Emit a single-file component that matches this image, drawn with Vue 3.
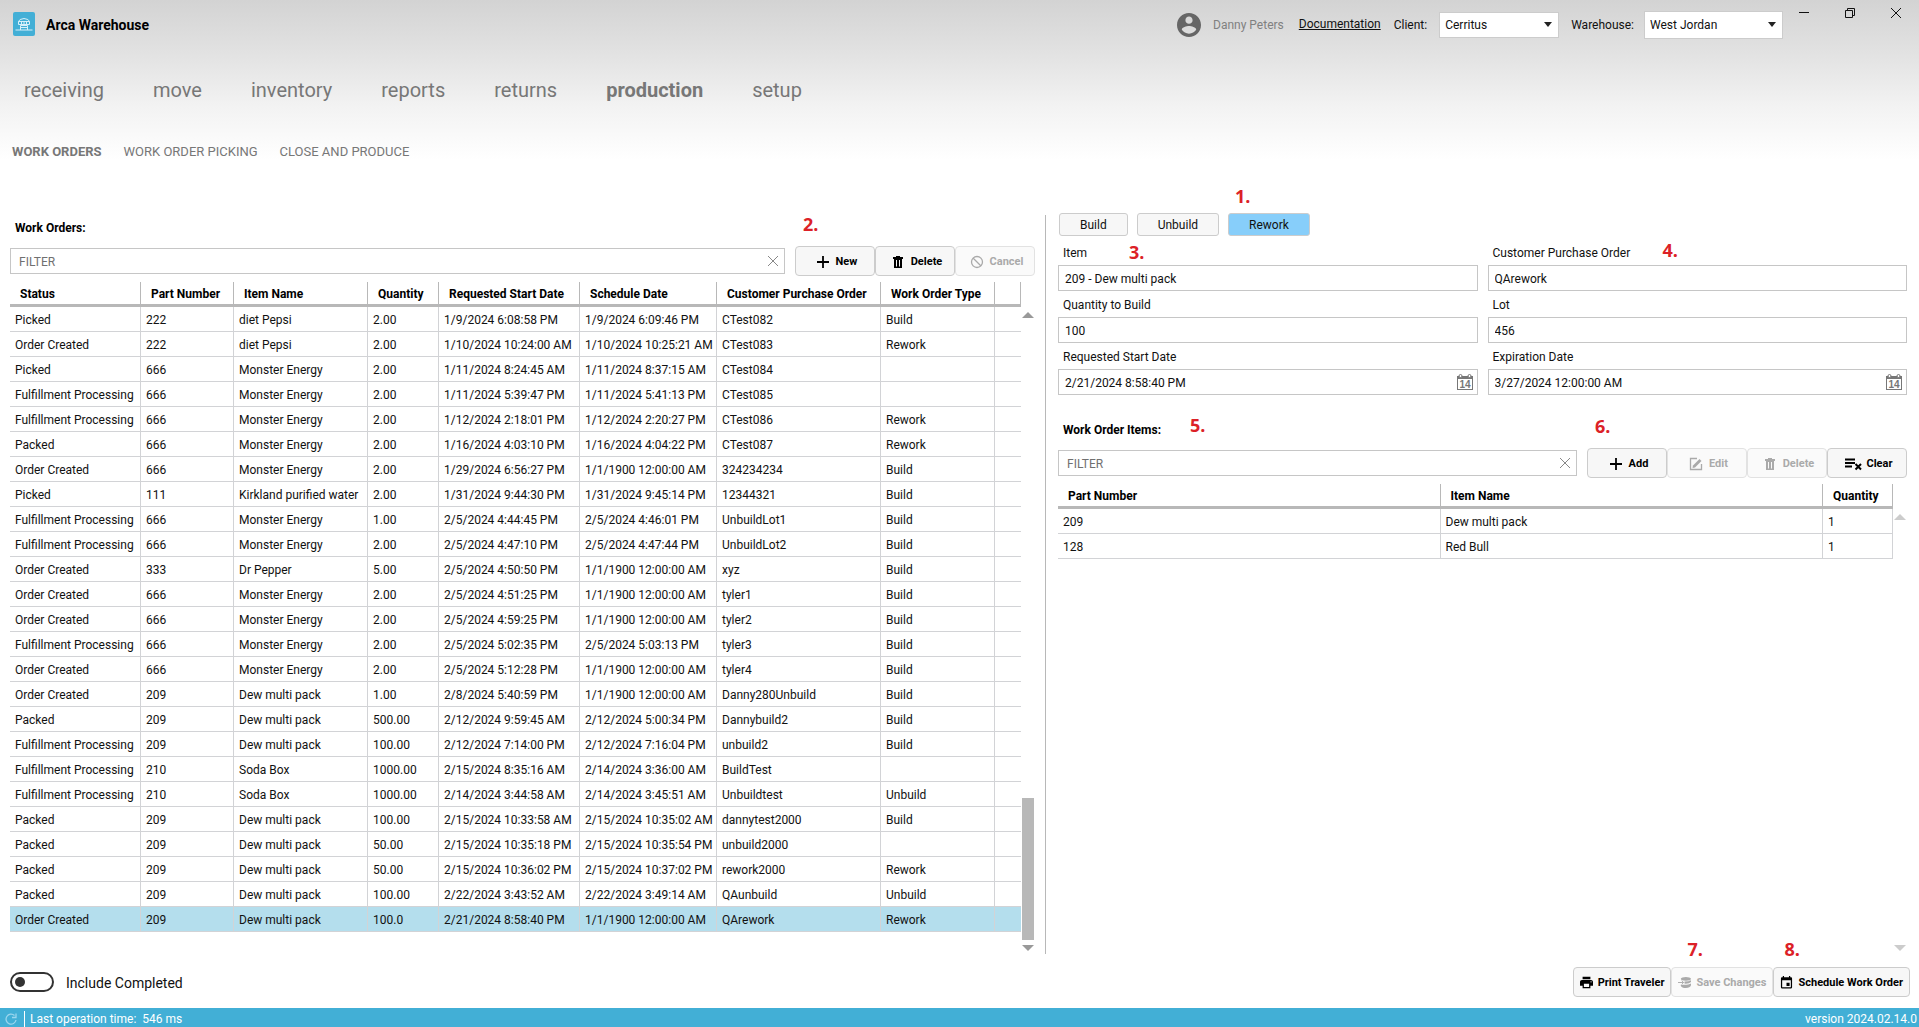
<script setup>
import { ref } from 'vue'

const navItems = ['receiving', 'move', 'inventory', 'reports', 'returns', 'production', 'setup']
const activeNav = ref('production')
const subItems = ['WORK ORDERS', 'WORK ORDER PICKING', 'CLOSE AND PRODUCE']
const activeSub = ref('WORK ORDERS')

const client = ref('Cerritus')
const warehouse = ref('West Jordan')
const orderFilter = ref('')
const itemFilter = ref('')
const includeCompleted = ref(false)

const modes = ['Build', 'Unbuild', 'Rework']
const mode = ref('Rework')

const form = ref({
  item: '209 - Dew multi pack',
  po: 'QArework',
  quantity: '100',
  lot: '456',
  start: '2/21/2024 8:58:40 PM',
  expires: '3/27/2024 12:00:00 AM'
})
const fields = [
  { key: 'item', label: 'Item', mark: '3.' },
  { key: 'po', label: 'Customer Purchase Order', mark: '4.' },
  { key: 'quantity', label: 'Quantity to Build' },
  { key: 'lot', label: 'Lot' },
  { key: 'start', label: 'Requested Start Date', date: true },
  { key: 'expires', label: 'Expiration Date', date: true }
]

const orderColumns = [
  'Status', 'Part Number', 'Item Name', 'Quantity', 'Requested Start Date',
  'Schedule Date', 'Customer Purchase Order', 'Work Order Type', ''
]
const F = 'Fulfillment Processing'
const O = 'Order Created'
const orders = [
  ['Picked', '222', 'diet Pepsi', '2.00', '1/9/2024 6:08:58 PM', '1/9/2024 6:09:46 PM', 'CTest082', 'Build'],
  [O, '222', 'diet Pepsi', '2.00', '1/10/2024 10:24:00 AM', '1/10/2024 10:25:21 AM', 'CTest083', 'Rework'],
  ['Picked', '666', 'Monster Energy', '2.00', '1/11/2024 8:24:45 AM', '1/11/2024 8:37:15 AM', 'CTest084', ''],
  [F, '666', 'Monster Energy', '2.00', '1/11/2024 5:39:47 PM', '1/11/2024 5:41:13 PM', 'CTest085', ''],
  [F, '666', 'Monster Energy', '2.00', '1/12/2024 2:18:01 PM', '1/12/2024 2:20:27 PM', 'CTest086', 'Rework'],
  ['Packed', '666', 'Monster Energy', '2.00', '1/16/2024 4:03:10 PM', '1/16/2024 4:04:22 PM', 'CTest087', 'Rework'],
  [O, '666', 'Monster Energy', '2.00', '1/29/2024 6:56:27 PM', '1/1/1900 12:00:00 AM', '324234234', 'Build'],
  ['Picked', '111', 'Kirkland purified water', '2.00', '1/31/2024 9:44:30 PM', '1/31/2024 9:45:14 PM', '12344321', 'Build'],
  [F, '666', 'Monster Energy', '1.00', '2/5/2024 4:44:45 PM', '2/5/2024 4:46:01 PM', 'UnbuildLot1', 'Build'],
  [F, '666', 'Monster Energy', '2.00', '2/5/2024 4:47:10 PM', '2/5/2024 4:47:44 PM', 'UnbuildLot2', 'Build'],
  [O, '333', 'Dr Pepper', '5.00', '2/5/2024 4:50:50 PM', '1/1/1900 12:00:00 AM', 'xyz', 'Build'],
  [O, '666', 'Monster Energy', '2.00', '2/5/2024 4:51:25 PM', '1/1/1900 12:00:00 AM', 'tyler1', 'Build'],
  [O, '666', 'Monster Energy', '2.00', '2/5/2024 4:59:25 PM', '1/1/1900 12:00:00 AM', 'tyler2', 'Build'],
  [F, '666', 'Monster Energy', '2.00', '2/5/2024 5:02:35 PM', '2/5/2024 5:03:13 PM', 'tyler3', 'Build'],
  [O, '666', 'Monster Energy', '2.00', '2/5/2024 5:12:28 PM', '1/1/1900 12:00:00 AM', 'tyler4', 'Build'],
  [O, '209', 'Dew multi pack', '1.00', '2/8/2024 5:40:59 PM', '1/1/1900 12:00:00 AM', 'Danny280Unbuild', 'Build'],
  ['Packed', '209', 'Dew multi pack', '500.00', '2/12/2024 9:59:45 AM', '2/12/2024 5:00:34 PM', 'Dannybuild2', 'Build'],
  [F, '209', 'Dew multi pack', '100.00', '2/12/2024 7:14:00 PM', '2/12/2024 7:16:04 PM', 'unbuild2', 'Build'],
  [F, '210', 'Soda Box', '1000.00', '2/15/2024 8:35:16 AM', '2/14/2024 3:36:00 AM', 'BuildTest', ''],
  [F, '210', 'Soda Box', '1000.00', '2/14/2024 3:44:58 AM', '2/14/2024 3:45:51 AM', 'Unbuildtest', 'Unbuild'],
  ['Packed', '209', 'Dew multi pack', '100.00', '2/15/2024 10:33:58 AM', '2/15/2024 10:35:02 AM', 'dannytest2000', 'Build'],
  ['Packed', '209', 'Dew multi pack', '50.00', '2/15/2024 10:35:18 PM', '2/15/2024 10:35:54 PM', 'unbuild2000', ''],
  ['Packed', '209', 'Dew multi pack', '50.00', '2/15/2024 10:36:02 PM', '2/15/2024 10:37:02 PM', 'rework2000', 'Rework'],
  ['Packed', '209', 'Dew multi pack', '100.00', '2/22/2024 3:43:52 AM', '2/22/2024 3:49:14 AM', 'QAunbuild', 'Unbuild'],
  [O, '209', 'Dew multi pack', '100.0', '2/21/2024 8:58:40 PM', '1/1/1900 12:00:00 AM', 'QArework', 'Rework']
]
const selected = ref(orders.length - 1)

const items = [
  ['209', 'Dew multi pack', '1'],
  ['128', 'Red Bull', '1']
]
</script>

<template>
  <div class="app">
    <header>
      <div class="topbar">
        <svg class="logo" viewBox="0 0 22 24" aria-hidden="true">
          <rect width="22" height="24" rx="2" fill="#43afd6" />
          <g fill="none" stroke="#d8f0fa" stroke-width="1">
            <path d="M5.500 12.500V9.500Q6 7 11 6.500Q16 7 16.500 9.500V12.500M5.500 9.500H16.500M5.500 12.500H16.500" />
            <path d="M8.500 10V12M11 10V12M13.500 10V12" />
            <path d="M7.500 18V13.500H14.500V18M7.500 15.500H14.500M2.500 18H19.500" />
          </g>
        </svg>
        <h1>Arca Warehouse</h1>
        <div class="session">
          <svg class="avatar" viewBox="2 2 20 20" aria-hidden="true"><path fill="#666" d="M12 2C6.480 2 2 6.480 2 12s4.480 10 10 10 10-4.480 10-10S17.520 2 12 2zm0 3c1.660 0 3 1.340 3 3s-1.340 3-3 3-3-1.340-3-3 1.340-3 3-3zm0 14.200c-2.500 0-4.710-1.280-6-3.220.03-1.990 4-3.080 6-3.080 1.990 0 5.970 1.090 6 3.080-1.290 1.940-3.500 3.220-6 3.220z" /></svg>
          <span class="user">Danny Peters</span>
          <a class="docs" href="#">Documentation</a>
          <label for="client">Client:</label>
          <span class="picker client">
            <select id="client" v-model="client"><option>Cerritus</option></select>
            <svg viewBox="0 0 8 5" aria-hidden="true"><path d="M0 0H8L4 5z" fill="#222" /></svg>
          </span>
          <label for="warehouse">Warehouse:</label>
          <span class="picker warehouse">
            <select id="warehouse" v-model="warehouse"><option>West Jordan</option></select>
            <svg viewBox="0 0 8 5" aria-hidden="true"><path d="M0 0H8L4 5z" fill="#222" /></svg>
          </span>
        </div>
        <div class="window-buttons">
          <button type="button" aria-label="Minimize"><svg viewBox="0 0 12 12"><path d="M1 5.500H11" /></svg></button>
          <button type="button" aria-label="Restore"><svg viewBox="0 0 12 12"><path d="M1.500 3.500H8.500V10.500H1.500zM3.500 3.500V1.500H10.500V8.500H8.500" /></svg></button>
          <button type="button" aria-label="Close"><svg viewBox="0 0 12 12"><path d="M1 1L11 11M11 1L1 11" /></svg></button>
        </div>
      </div>
      <nav class="nav">
        <a v-for="n in navItems" :key="n" href="#" :class="{ active: n === activeNav }" @click.prevent="activeNav = n">{{ n }}</a>
      </nav>
      <nav class="subnav">
        <a v-for="n in subItems" :key="n" href="#" :class="{ active: n === activeSub }" @click.prevent="activeSub = n">{{ n }}</a>
      </nav>
    </header>

    <main>
      <section class="panel orders">
        <h2>Work Orders:</h2>
        <div class="toolbar">
          <div class="filter">
            <input v-model="orderFilter" type="text" placeholder="FILTER" aria-label="Filter work orders" />
            <button type="button" aria-label="Clear filter" @click="orderFilter = ''"><svg viewBox="0 0 12 12"><path d="M1 1L11 11M11 1L1 11" /></svg></button>
          </div>
          <div class="actions">
            <span class="mark above">2.</span>
            <button type="button"><svg viewBox="0 0 14 14"><path d="M7 1V13M1 7H13" stroke="currentColor" stroke-width="1.800" /></svg>New</button>
            <button type="button"><svg viewBox="0 0 14 14"><path fill="currentColor" fill-rule="evenodd" d="M2 2H5V1H9V2H12V4H2zM3 4H11V13H3zM5 5V11.500H6V5zM8 5V11.500H9V5z" /></svg>Delete</button>
            <button type="button" disabled><svg viewBox="0 0 14 14"><g fill="none" stroke="currentColor" stroke-width="1.300"><circle cx="7" cy="7" r="5.500" /><path d="M3 3L11 11" /></g></svg>Cancel</button>
          </div>
        </div>
        <div class="grid">
          <table class="order-table">
            <colgroup><col v-for="(c, i) in orderColumns" :key="i" :class="'c' + i" /></colgroup>
            <thead><tr><th v-for="(c, i) in orderColumns" :key="i">{{ c }}</th></tr></thead>
            <tbody>
              <tr v-for="(row, r) in orders" :key="r" :class="{ selected: r === selected }" @click="selected = r">
                <td v-for="(c, i) in row" :key="i">{{ c }}</td>
                <td></td>
              </tr>
            </tbody>
          </table>
          <div class="scroll">
            <svg viewBox="0 0 12 6"><path d="M0 6H12L6 0z" /></svg>
            <div class="track"><div class="thumb"></div></div>
            <svg viewBox="0 0 12 6"><path d="M0 0H12L6 6z" /></svg>
          </div>
        </div>
      </section>

      <div class="divider"></div>

      <section class="panel detail">
        <div class="modes">
          <button v-for="m in modes" :key="m" type="button" :class="{ active: m === mode }" @click="mode = m">{{ m }}</button>
          <span class="mark mode-mark">1.</span>
        </div>
        <form class="form" @submit.prevent>
          <div v-for="f in fields" :key="f.key" class="field">
            <label :for="f.key">{{ f.label }}</label>
            <span v-if="f.mark" class="mark" :class="f.key">{{ f.mark }}</span>
            <div class="box">
              <input :id="f.key" v-model="form[f.key]" type="text" />
              <button v-if="f.date" type="button" :aria-label="'Pick ' + f.label">
                <svg viewBox="0 0 16 16">
                  <path d="M0 2H16V16H0zM1 5V15H15V5z" fill="#777" fill-rule="evenodd" />
                  <g fill="#fff" stroke="#777"><circle cx="3.500" cy="2" r="1.500" /><circle cx="12.500" cy="2" r="1.500" /></g>
                  <text x="8" y="14" text-anchor="middle" font-size="10" font-weight="700" fill="#777">14</text>
                </svg>
              </button>
            </div>
          </div>
        </form>
        <h2>Work Order Items:<span class="mark items-mark">5.</span></h2>
        <div class="toolbar">
          <div class="filter">
            <input v-model="itemFilter" type="text" placeholder="FILTER" aria-label="Filter work order items" />
            <button type="button" aria-label="Clear filter" @click="itemFilter = ''"><svg viewBox="0 0 12 12"><path d="M1 1L11 11M11 1L1 11" /></svg></button>
          </div>
          <div class="actions">
            <span class="mark above">6.</span>
            <button type="button"><svg viewBox="0 0 14 14"><path d="M7 1V13M1 7H13" stroke="currentColor" stroke-width="1.800" /></svg>Add</button>
            <button type="button" disabled><svg viewBox="0 0 14 14"><path d="M8 1.500H1.500V12.500H12.500V7" fill="none" stroke="currentColor" stroke-width="1.300" /><path d="M4 8.500L10.500 2L12.500 4L6 10.500L3.500 11z" fill="currentColor" /></svg>Edit</button>
            <button type="button" disabled><svg viewBox="0 0 14 14"><path fill="currentColor" fill-rule="evenodd" d="M2 2H5V1H9V2H12V4H2zM3 4H11V13H3zM5 5V11.500H6V5zM8 5V11.500H9V5z" /></svg>Delete</button>
            <button type="button" class="clear"><svg viewBox="0 0 17 14"><path d="M0 2.500H10M0 6H10M0 9.500H7M10.500 7L16 12.500M16 7L10.500 12.500" stroke="currentColor" stroke-width="2" /></svg>Clear</button>
          </div>
        </div>
        <div class="grid">
          <table class="item-table">
            <colgroup><col /><col /><col class="qty" /></colgroup>
            <thead><tr><th>Part Number</th><th>Item Name</th><th>Quantity</th></tr></thead>
            <tbody>
              <tr v-for="row in items" :key="row[0]"><td v-for="(c, i) in row" :key="i">{{ c }}</td></tr>
            </tbody>
          </table>
          <div class="scroll idle">
            <svg viewBox="0 0 12 6"><path d="M0 6H12L6 0z" /></svg>
            <div class="track"></div>
            <svg viewBox="0 0 12 6"><path d="M0 0H12L6 6z" /></svg>
          </div>
        </div>
      </section>
    </main>

    <div class="bottom">
      <label class="toggle">
        <input v-model="includeCompleted" type="checkbox" />
        <span>Include Completed</span>
      </label>
      <div class="actions">
        <button type="button"><svg viewBox="2 2 20 20"><path fill="currentColor" d="M19 8H5c-1.660 0-3 1.340-3 3v6h4v4h12v-4h4v-6c0-1.660-1.340-3-3-3zm-3 11H8v-5h8v5zm3-7c-.55 0-1-.45-1-1s.45-1 1-1 1 .45 1 1-.45 1-1 1zm-1-9H6v4h12V3z" /></svg>Print Traveler</button>
        <button type="button" disabled>
          <span class="mark save-mark">7.</span>
          <svg viewBox="0 0 14 14"><path d="M0 7H6M4 5L6 7L4 9" fill="none" stroke="currentColor" /><path d="M3 3Q4 1 8.500 1T14 3Q14 5 8.500 5T3 3zM7 6Q12 6 14 4.500V6.500Q12 8.500 7 8.200zM6 9.500Q12 9.500 14 8V10Q13 13 8.500 13T3 10.500L3 9.500z" fill="currentColor" /></svg>Save Changes
        </button>
        <button type="button">
          <span class="mark schedule-mark">8.</span>
          <svg viewBox="2 1 20 21"><path fill="currentColor" d="M17 12h-5v5h5v-5zM16 1v2H8V1H6v2H5c-1.110 0-1.990.9-1.990 2L3 19c0 1.100.89 2 2 2h14c1.100 0 2-.9 2-2V5c0-1.100-.9-2-2-2h-1V1h-2zm3 18H5V8h14v11z" /></svg>Schedule Work Order
        </button>
      </div>
    </div>

    <footer>
      <svg viewBox="0 0 12 12" aria-hidden="true"><path d="M9.500 2.500A5 5 0 1 0 11 7M11 0.500V4.500H7" fill="none" stroke="#9bd6ee" stroke-width="1.300" /></svg>
      <span class="timing">Last operation time:&nbsp; 546 ms</span>
      <span class="version">version 2024.02.14.0</span>
    </footer>
  </div>
</template>

<style>
body { background: #fff; }
</style>

<style scoped>
* { box-sizing: border-box; }
.app {
  min-height: 100vh;
  display: flex;
  flex-direction: column;
  font: 12px/16px Roboto, "Liberation Sans", sans-serif;
  color: #111;
  background: linear-gradient(#d3d3d3, #e4e4e4 60px, #f2f2f2 105px, #fff 160px);
}
button, input, select { font: inherit; color: inherit; }
button { padding: 0; cursor: pointer; }
button:disabled { cursor: default; }
a { color: inherit; text-decoration: none; }

.topbar { display: flex; height: 48px; padding-left: 13px; }
.logo { width: 22px; height: 24px; margin-top: 12px; }
h1 { margin: 0 0 0 11px; font-size: 14px; line-height: 50px; font-weight: 700; color: #000; }
.session { display: flex; align-items: center; margin-left: auto; padding-top: 2px; }
.avatar { width: 24px; height: 24px; margin-right: 12px; }
.user { color: #808080; margin-right: 15px; }
.docs { text-decoration: underline; margin-right: 13px; padding-bottom: 2px; }
.picker { position: relative; display: block; height: 28px; margin: 0 12px; }
.picker.client { width: 120px; height: 26px; }
.picker.warehouse { width: 139px; margin: 0 0 0 10px; }
.picker select { width: 100%; height: 100%; padding: 0 20px 0 5px; border: 1px solid #ccc; border-radius: 0; background: #fff; appearance: none; }
.picker svg { position: absolute; right: 7px; top: 50%; margin-top: -3px; width: 8px; height: 5px; pointer-events: none; }
.window-buttons { display: flex; margin-left: 9px; }
.window-buttons button { width: 46px; height: 26px; border: 0; background: none; display: grid; place-items: center; }
.window-buttons button:first-child { width: 24px; margin-right: 11px; }
.window-buttons svg { width: 12px; height: 12px; fill: none; stroke: #111; }

.nav { display: flex; gap: 49px; margin-top: 27px; padding-left: 24px; font-size: 20px; line-height: 30px; color: #777; }
.subnav { display: flex; gap: 22px; margin: 37px 0 51px; padding-left: 12px; font-size: 13px; line-height: 20px; color: #777; }
.active { font-weight: 700; }

main { flex: 1; display: grid; grid-template-columns: 1045fr 1px 873fr; }
.divider { margin-top: 2px; background: #b8b8b8; }
.panel { display: flex; flex-direction: column; min-width: 0; }
.orders { padding: 0 10px; }
.detail { padding: 0 12px; }
h2 { position: relative; margin: 0 0 5px; padding: 2px 0 0 5px; font-size: 12px; line-height: 26px; color: #000; }
.toolbar { display: flex; align-items: center; gap: 10px; margin-bottom: 6px; }
.filter, .box { display: flex; flex: 1; height: 26px; border: 1px solid #c6c6c6; background: #fff; }
.filter input, .box input { flex: 1; min-width: 0; padding: 1px 6px 0; border: 0; background: none; outline: 0; }
.filter input { padding: 1px 8px 0; }
.filter input::placeholder { color: #707070; opacity: 1; }
.filter button { width: 22px; border: 0; background: none; display: grid; place-items: center; }
.filter svg { width: 12px; height: 12px; stroke: #888; }

.actions { position: relative; display: flex; }
.actions button {
  position: relative;
  display: flex;
  align-items: center;
  justify-content: center;
  gap: 6px;
  min-width: 80px;
  height: 30px;
  padding: 1px 0 0 3px;
  border: 1px solid #ccc;
  border-radius: 4px;
  background: #f7f7f7;
  font-size: 11px;
  font-weight: 700;
  color: #000;
}
.actions button:disabled { color: #aaa; border-color: #e2e2e2; background: #fafafa; }
.actions button.clear { gap: 5px; }
.actions svg { width: 14px; height: 14px; }
.actions .clear svg { width: 17px; }

.grid { flex: 1; display: flex; align-items: stretch; }
table { flex: 1; align-self: flex-start; table-layout: fixed; width: 0; border-collapse: separate; border-spacing: 0; background: #fff; }
th, td { height: 25px; padding: 2px 5px 0; text-align: left; white-space: nowrap; border-right: 1px solid #d2d3d6; border-bottom: 1px solid #d2d3d6; }
th { padding: 2px 10px 0; border-right-color: #b8b8b8; border-bottom: 3px solid #b8b8b8; font-weight: 700; color: #000; }
.order-table td:last-child { border-right: 0; }
.selected td { background: #b4deed; }
.c0 { width: 131px; }
.c1 { width: 93px; }
.c2 { width: 134px; }
.c3 { width: 71px; }
.c4 { width: 141px; }
.c5 { width: 137px; }
.c6 { width: 164px; }
.c7 { width: 114px; }
.qty { width: 70px; }
.scroll { width: 14px; padding: 30px 1px 3px; display: flex; flex-direction: column; gap: 5px; }
.scroll svg { width: 12px; height: 6px; fill: #999; }
.scroll.idle svg { fill: #ccc; }
.track { flex: 1; display: flex; flex-direction: column; justify-content: flex-end; }
.thumb { height: 23%; background: #b8b8b8; }

.modes { position: relative; display: flex; gap: 9px; padding-left: 1px; margin-bottom: 3px; }
.modes button { height: 23px; padding: 1px 20px 0; border: 1px solid #ccc; border-radius: 3px; background: #f7f7f7; }
.modes button.active { background: #87cefa; font-weight: 400; }
.form { display: grid; grid-template-columns: 1fr 1fr; column-gap: 10px; margin-bottom: 20px; }
.field { position: relative; }
.field label { display: block; line-height: 24px; padding: 2px 0 0 5px; }
.box button { width: 24px; border: 0; background: none; display: grid; place-items: center; }
.box svg { width: 16px; height: 16px; overflow: visible; font-family: "Liberation Sans", sans-serif; }

.mark { position: absolute; font: 700 18px/18px "Open Sans", "Noto Sans", sans-serif; color: #dc2127; }
.above { left: 8px; top: -31px; }
.mode-mark { left: 177px; top: -26px; }
.mark.item { left: 71px; top: 4px; }
.mark.po { left: 175px; top: 2px; }
.items-mark { left: 132px; top: 1px; }
.save-mark { left: 15px; top: -28px; }
.schedule-mark { left: 10px; top: -28px; }

.bottom { display: flex; justify-content: space-between; align-items: center; height: 54px; padding: 2px 9px 0 10px; }
.bottom .actions button { gap: 5px; padding: 1px 6px 0; }
.bottom .actions svg { width: 13px; height: 13px; }
.toggle { display: flex; align-items: center; gap: 12px; font-size: 14px; }
.toggle span { padding-top: 1px; }
.toggle input { appearance: none; width: 44px; height: 20px; margin: 0; padding: 3px; border: 2px solid #333; border-radius: 10px; background: #fff; display: flex; align-items: center; }
.toggle input::before { content: ""; width: 10px; height: 10px; border-radius: 50%; background: #333; }
.toggle input:checked { justify-content: flex-end; }

footer { display: flex; align-items: center; height: 19px; padding: 3px 2px 0 5px; background: #42afd6; color: #fff; font-size: 12px; }
footer svg { width: 12px; height: 12px; }
.timing { margin-left: 7px; padding-left: 5px; border-left: 1px solid #fff; }
.version { margin-left: auto; }
</style>
